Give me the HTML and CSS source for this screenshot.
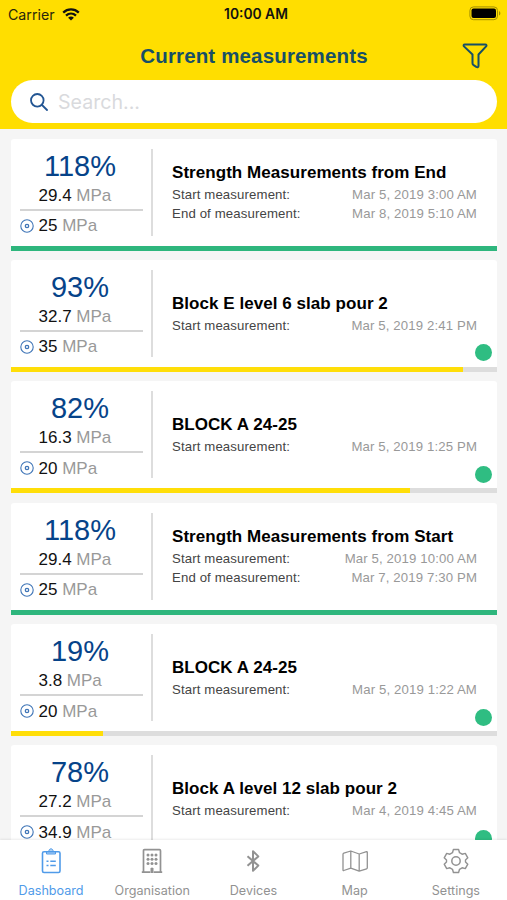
FILE: index.html
```html
<!DOCTYPE html>
<html lang="en">
<head>
<meta charset="utf-8">
<title>Current measurements</title>
<link rel="stylesheet" href="styles.css">
</head>
<body>
<svg width="0" height="0" class="defs"><symbol id="target" viewBox="0 0 14 14"><circle cx="7" cy="7" r="6.2" fill="none" stroke="currentColor" stroke-width="1.1"/><circle cx="7" cy="7" r="1.7" fill="none" stroke="currentColor" stroke-width="1.3"/></symbol></svg>
<header class="header">
  <div class="status">
    <div class="carrier"><span>Carrier</span>
      <svg width="18" height="13" viewBox="0 0 18 13" fill="none" stroke="#111" stroke-width="2.3"><path d="M1.2 4.6C5.7.4 12.3.4 16.8 4.6M4 7.7c2.9-2.7 7.1-2.7 10 0"/><path d="M9 12.5 6.1 9.7c1.7-1.5 4.1-1.5 5.8 0z" fill="#111" stroke="none"/></svg>
    </div>
    <div class="clock">10:00 AM</div>
    <svg class="battery" width="32" height="15" viewBox="0 0 32 15"><rect x=".9" y=".9" width="27.6" height="12.8" rx="3.6" fill="none" stroke="#a39000"/><rect x="2.5" y="2.5" width="24.5" height="9.6" rx="2" fill="#000"/><path d="M30 5v4.600c1.900-.8 1.900-3.800 0-4.600z" fill="#a39000"/></svg>
  </div>
  <div class="heading">
    <h1>Current measurements</h1>
    <svg class="filter" width="26" height="26" viewBox="0 0 26 26" fill="none" stroke="#174f66" stroke-width="2" stroke-linejoin="round"><path d="M2.800 1.500h20.400c1.300 0 1.700 1 .9 1.900L16.500 11.500v11.300c0 1.400-1 1.800-2.200 1.100l-2.700-1.700c-.7-.5-1.100-1-1.100-1.900v-8.800L2 3.400C1.200 2.500 1.600 1.500 2.800 1.500z"/></svg>
  </div>
  <div class="search">
    <svg width="18" height="18" viewBox="0 0 18 18" fill="none" stroke="#225593" stroke-width="1.800" stroke-linecap="round"><circle cx="7.300" cy="7.300" r="6.300"/><path d="m12 12 5 5"/></svg>
    <span>Search...</span>
  </div>
</header>
<main class="list">
  <article class="card">
    <div class="body"><div class="stats"><div class="pct">118%</div><div class="now">29.4 <i>MPa</i></div><div class="goal"><svg><use href="#target"/></svg>25 <i>MPa</i></div></div>
    <div class="info"><h2>Strength Measurements from End</h2><div class="row"><span>Start measurement:</span><time>Mar 5, 2019 3:00 AM</time></div><div class="row"><span>End of measurement:</span><time>Mar 8, 2019 5:10 AM</time></div></div></div>
    <div class="bar"><div class="fill done" style="width:100%"></div></div>
  </article>
  <article class="card">
    <div class="body"><div class="stats"><div class="pct">93%</div><div class="now">32.7 <i>MPa</i></div><div class="goal"><svg><use href="#target"/></svg>35 <i>MPa</i></div></div>
    <div class="info"><h2>Block E level 6 slab pour 2</h2><div class="row"><span>Start measurement:</span><time>Mar 5, 2019 2:41 PM</time></div></div></div>
    <b class="dot"></b><div class="bar"><div class="fill" style="width:93%"></div></div>
  </article>
  <article class="card">
    <div class="body"><div class="stats"><div class="pct">82%</div><div class="now">16.3 <i>MPa</i></div><div class="goal"><svg><use href="#target"/></svg>20 <i>MPa</i></div></div>
    <div class="info"><h2>BLOCK A 24-25</h2><div class="row"><span>Start measurement:</span><time>Mar 5, 2019 1:25 PM</time></div></div></div>
    <b class="dot"></b><div class="bar"><div class="fill" style="width:82%"></div></div>
  </article>
  <article class="card">
    <div class="body"><div class="stats"><div class="pct">118%</div><div class="now">29.4 <i>MPa</i></div><div class="goal"><svg><use href="#target"/></svg>25 <i>MPa</i></div></div>
    <div class="info"><h2>Strength Measurements from Start</h2><div class="row"><span>Start measurement:</span><time>Mar 5, 2019 10:00 AM</time></div><div class="row"><span>End of measurement:</span><time>Mar 7, 2019 7:30 PM</time></div></div></div>
    <div class="bar"><div class="fill done" style="width:100%"></div></div>
  </article>
  <article class="card">
    <div class="body"><div class="stats"><div class="pct">19%</div><div class="now">3.8 <i>MPa</i></div><div class="goal"><svg><use href="#target"/></svg>20 <i>MPa</i></div></div>
    <div class="info"><h2>BLOCK A 24-25</h2><div class="row"><span>Start measurement:</span><time>Mar 5, 2019 1:22 AM</time></div></div></div>
    <b class="dot"></b><div class="bar"><div class="fill" style="width:19%"></div></div>
  </article>
  <article class="card">
    <div class="body"><div class="stats"><div class="pct">78%</div><div class="now">27.2 <i>MPa</i></div><div class="goal"><svg><use href="#target"/></svg>34.9 <i>MPa</i></div></div>
    <div class="info"><h2>Block A level 12 slab pour 2</h2><div class="row"><span>Start measurement:</span><time>Mar 4, 2019 4:45 AM</time></div></div></div>
    <b class="dot"></b><div class="bar"><div class="fill" style="width:78%"></div></div>
  </article>
</main>
<nav class="tabs">
  <a class="tab active"><svg viewBox="0 0 26 26"><rect x="4.500" y="3.800" width="17.500" height="20.700" rx="1.500" stroke-width="1.600"/><path d="M8.500 6V3.500h2.300c0-3.600 4.400-3.600 4.400 0h2.300V6z" fill="currentColor" fill-opacity=".45"/><path d="M8.500 13.300h2M8.500 17.400h2M12.300 13.300h5.500M12.300 17.400h5.500" stroke-width="1.500"/></svg><span>Dashboard</span></a>
  <a class="tab"><svg viewBox="0 0 26 26"><path d="M4.500 24V2.700q0-1 1-1h15q1 0 1 1V24M2.800 24.200h8.400M14.800 24.200h8.400" stroke-width="1.700"/><g fill="currentColor" stroke="none"><circle cx="9" cy="7" r="1.500"/><circle cx="13" cy="7" r="1.500"/><circle cx="17" cy="7" r="1.500"/><circle cx="9" cy="11.300" r="1.500"/><circle cx="13" cy="11.300" r="1.500"/><circle cx="17" cy="11.300" r="1.500"/><circle cx="9" cy="15.600" r="1.500"/><circle cx="13" cy="15.600" r="1.500"/><circle cx="17" cy="15.600" r="1.500"/><path d="M11.500 25v-4.500q1.500-2 3 0V25z"/></g></svg><span>Organisation</span></a>
  <a class="tab"><svg viewBox="0 0 26 26"><path d="m7.500 8.200 10.800 9.400-5.300 5.200V3.200l5.300 5.200L7.500 17.800" stroke-width="2"/></svg><span>Devices</span></a>
  <a class="tab"><svg viewBox="0 0 26 26"><path d="M1 6.200q0-.8.8-1.100L8.800 3l8.400 3 7.300-2.300q.8-.2.800.6V19.800q0 .8-.7 1l-7.400 2.400-8.400-3-7 2.300q-.8.200-.8-.6zM8.800 3v17.200M17.200 6v17.200" stroke-width="1.300"/></svg><span>Map</span></a>
  <a class="tab"><svg viewBox="0 0 26 26"><path d="m9.500 4.700.9-3.200h5.200l.9 3.200 2.600 1.500 3.200-.8 2.500 4.400-2.300 2.200v2l2.300 2.200-2.500 4.400-3.200-.8-2.600 1.500-.9 3.200h-5.200l-.9-3.200-2.600-1.500-3.200.8-2.500-4.400L3.500 14v-2L1.200 9.800l2.500-4.400 3.200.8z" stroke-width="1.400"/><circle cx="13" cy="13" r="4.200" stroke-width="1.500"/></svg><span>Settings</span></a>
</nav>
</body>
</html>
```
FILE: styles.css
```css
* { box-sizing: border-box; }
body { margin: 0; width: 507px; height: 900px; overflow: hidden; display: flex; flex-direction: column; background: #f5f5f5; font-family: "Liberation Sans", Arial, sans-serif; }
.defs { position: absolute; }
.header { flex: none; height: 129px; background: #ffde00; padding: 0 10px 0 11px; }
.status { height: 28px; display: grid; grid-template-columns: 1fr auto 1fr; align-items: center; font: 14.2px Inter, sans-serif; color: #29270b; margin: 0 -3px; }
.carrier { display: flex; align-items: center; gap: 7px; }
.clock { font-size: 13.800px; font-weight: 600; color: #111; padding-left: 4px; }
.battery { justify-self: end; margin-right: -1px; margin-top: -1px; }
.heading { height: 52px; display: grid; grid-template-columns: 40px 1fr 40px; align-items: center; }
h1 { grid-column: 2; margin: 3px 0 0; text-align: center; font-size: 20.500px; letter-spacing: .15px; line-height: 24px; color: #174f66; white-space: nowrap; }
.filter { margin: 3px 0 0 5px; }
.search { height: 43px; border-radius: 21.500px; background: #fff; display: flex; align-items: center; gap: 10px; padding-left: 19px; font: 19.600px Inter, sans-serif; color: #d9dadd; }
.list { flex: 1; min-height: 0; overflow: hidden; padding: 9.500px 10px 0 11px; display: flex; flex-direction: column; gap: 9.400px; }
.card { flex: none; height: 112px; background: #fff; border-radius: 3px 3px 0 0; display: flex; flex-direction: column; position: relative; }
.body { flex: 1; display: flex; padding: 10px 20px 10px 9px; }
.stats { width: 133px; border-right: 2px solid #ddd; padding-right: 8px; height: 87px; }
.pct { height: 37px; line-height: 34px; font-size: 29px; text-align: center; color: #064389; padding-right: 3px; }
.now { height: 25px; line-height: 19px; padding-left: 18.500px; border-bottom: 2px solid #d4d4d4; font-size: 17px; color: #111; }
.goal { display: flex; align-items: center; height: 29px; font-size: 17px; color: #111; white-space: pre; padding-top: 2px; }
.goal svg { width: 14px; height: 14px; margin: -1px 4.500px 0 0; color: #3f75b7; }
i { font-style: normal; color: #999; }
.info { flex: 1; padding: 1px 0 0 19px; height: 87px; display: flex; flex-direction: column; justify-content: center; }
h2 { margin: 0 0 1px; font-size: 17px; letter-spacing: .05px; line-height: 22px; color: #000; white-space: nowrap; }
.row { display: flex; justify-content: space-between; line-height: 19.500px; font-size: 13.200px; color: #444; letter-spacing: .13px; }
time { color: #999; }
.dot { position: absolute; right: 5px; top: 84.500px; width: 17px; height: 17px; border-radius: 50%; background: #2fbd82; }
.bar { height: 5px; background: #ddd; }
.fill { height: 5px; background: #ffde08; }
.done { background: #2eb67d; }
.tabs { flex: none; height: 60px; background: #fff; display: grid; grid-template-columns: repeat(5, 1fr); padding: 0 .5px; box-shadow: 0 -1px 2px rgba(0,0,0,.08); position: relative; }
.tab { display: flex; flex-direction: column; align-items: center; padding-top: 8px; color: #929292; font: 12.600px Inter, sans-serif; }
.tab svg { width: 26px; height: 26px; fill: none; stroke: currentColor; stroke-linejoin: round; }
.tab span { margin-top: 8.500px; line-height: 16px; }
.active { color: #509be9; }
```
